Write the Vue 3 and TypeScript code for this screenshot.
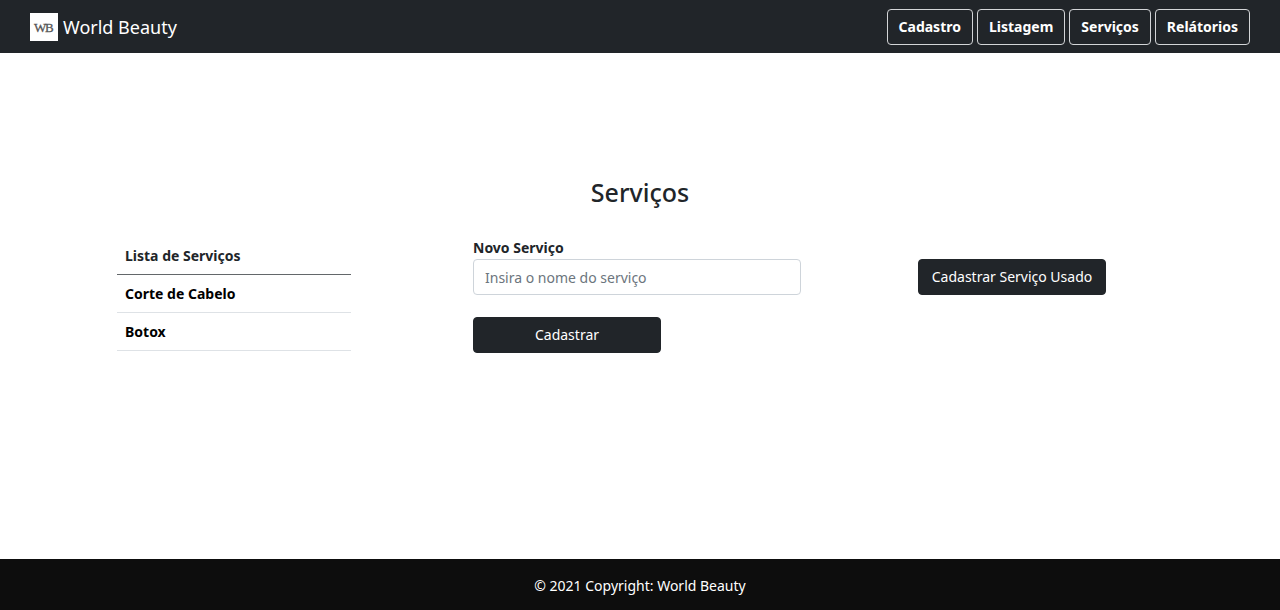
<script setup lang="ts">
import { ref } from 'vue'

const links: string[] = ['Cadastro', 'Listagem', 'Serviços', 'Relátorios']
const services = ref<string[]>(['Corte de Cabelo', 'Botox'])
const newService = ref('')

function addService(): void {
  const name = newService.value.trim()
  if (!name) return
  services.value.push(name)
  newService.value = ''
}
</script>

<template>
  <div class="page">
    <header class="navbar">
      <a class="brand" href="#">
        <svg class="logo" viewBox="0 0 28 28" aria-hidden="true">
          <rect width="28" height="28" fill="#fff" />
          <text x="4" y="19">W</text>
          <text x="15" y="19">B</text>
        </svg>
        <span>World Beauty</span>
      </a>
      <nav class="links">
        <button v-for="link in links" :key="link" type="button" class="nav-button">{{ link }}</button>
      </nav>
    </header>

    <main class="content">
      <h1 class="title">Serviços</h1>
      <div class="columns">
        <table class="services">
          <thead>
            <tr><th scope="col">Lista de Serviços</th></tr>
          </thead>
          <tbody>
            <tr v-for="service in services" :key="service"><td>{{ service }}</td></tr>
          </tbody>
        </table>
        <form class="form" @submit.prevent="addService">
          <label for="service-name">Novo Serviço</label>
          <input id="service-name" v-model="newService" type="text" placeholder="Insira o nome do serviço" />
          <button type="submit" class="button submit">Cadastrar</button>
        </form>
        <button type="button" class="button used">Cadastrar Serviço Usado</button>
      </div>
    </main>

    <footer class="footer">© 2021 Copyright: World Beauty</footer>
  </div>
</template>

<style>
body {
  margin: 0;
}
</style>

<style scoped>
.page {
  display: flex;
  flex-direction: column;
  min-height: 100vh;
  background: #fff;
  color: #212529;
  font-family: "Segoe UI", "Noto Sans", "Open Sans", sans-serif;
  font-size: 14px;
  line-height: 22px;
}

.page * {
  box-sizing: border-box;
}

.navbar {
  display: flex;
  align-items: center;
  justify-content: space-between;
  padding: 9px 30px 8px;
  background: #212529;
}

.brand {
  display: flex;
  align-items: center;
  gap: 5px;
  color: #fff;
  font-size: 18px;
  line-height: 28px;
  text-decoration: none;
}

.logo {
  width: 28px;
  height: 28px;
}

.logo text {
  fill: #555;
  stroke: #555;
  stroke-width: 0.3;
  font-family: "Liberation Serif", serif;
  font-size: 13px;
}

.links {
  display: flex;
  gap: 4px;
}

.nav-button {
  height: 36px;
  padding: 0 11px;
  border: 1px solid #d3d5d7;
  border-radius: 4px;
  background: transparent;
  color: #fff;
  font: inherit;
  font-weight: 700;
}

.content {
  flex: 1;
  padding-top: 122px;
}

.title {
  margin: 0 0 28px;
  font-size: 25px;
  font-weight: 500;
  line-height: 34px;
  text-align: center;
}

.columns {
  display: grid;
  grid-template-columns: 117fr 234fr 122fr 328fr 117fr 188fr 174fr;
  align-items: start;
}

.services {
  grid-column: 2;
  width: 100%;
  border-collapse: collapse;
  font-weight: 700;
  text-align: left;
}

.services th,
.services td {
  padding: 8px 8px 7px;
  border-bottom: 1px solid #dee2e6;
}

.services th {
  border-bottom-color: #63676a;
}

.services td {
  color: #000;
}

.form {
  grid-column: 4;
  display: flex;
  flex-direction: column;
}

.form label {
  font-weight: 700;
}

.form input {
  width: 100%;
  height: 36px;
  padding: 0 11px;
  border: 1px solid #ced4da;
  border-radius: 4px;
  background: #fff;
  color: #212529;
  font: inherit;
}

.form input::placeholder {
  color: #6c757d;
  opacity: 1;
}

.button {
  height: 36px;
  padding: 0;
  border: 1px solid #212529;
  border-radius: 4px;
  background: #212529;
  color: #fff;
  font: inherit;
  white-space: nowrap;
}

.submit {
  width: 188px;
  margin-top: 22px;
}

.used {
  grid-column: 6;
  margin-top: 22px;
}

.footer {
  padding: 16px 15px 13px;
  background: #0d0d0d;
  color: #fff;
  text-align: center;
}
</style>
